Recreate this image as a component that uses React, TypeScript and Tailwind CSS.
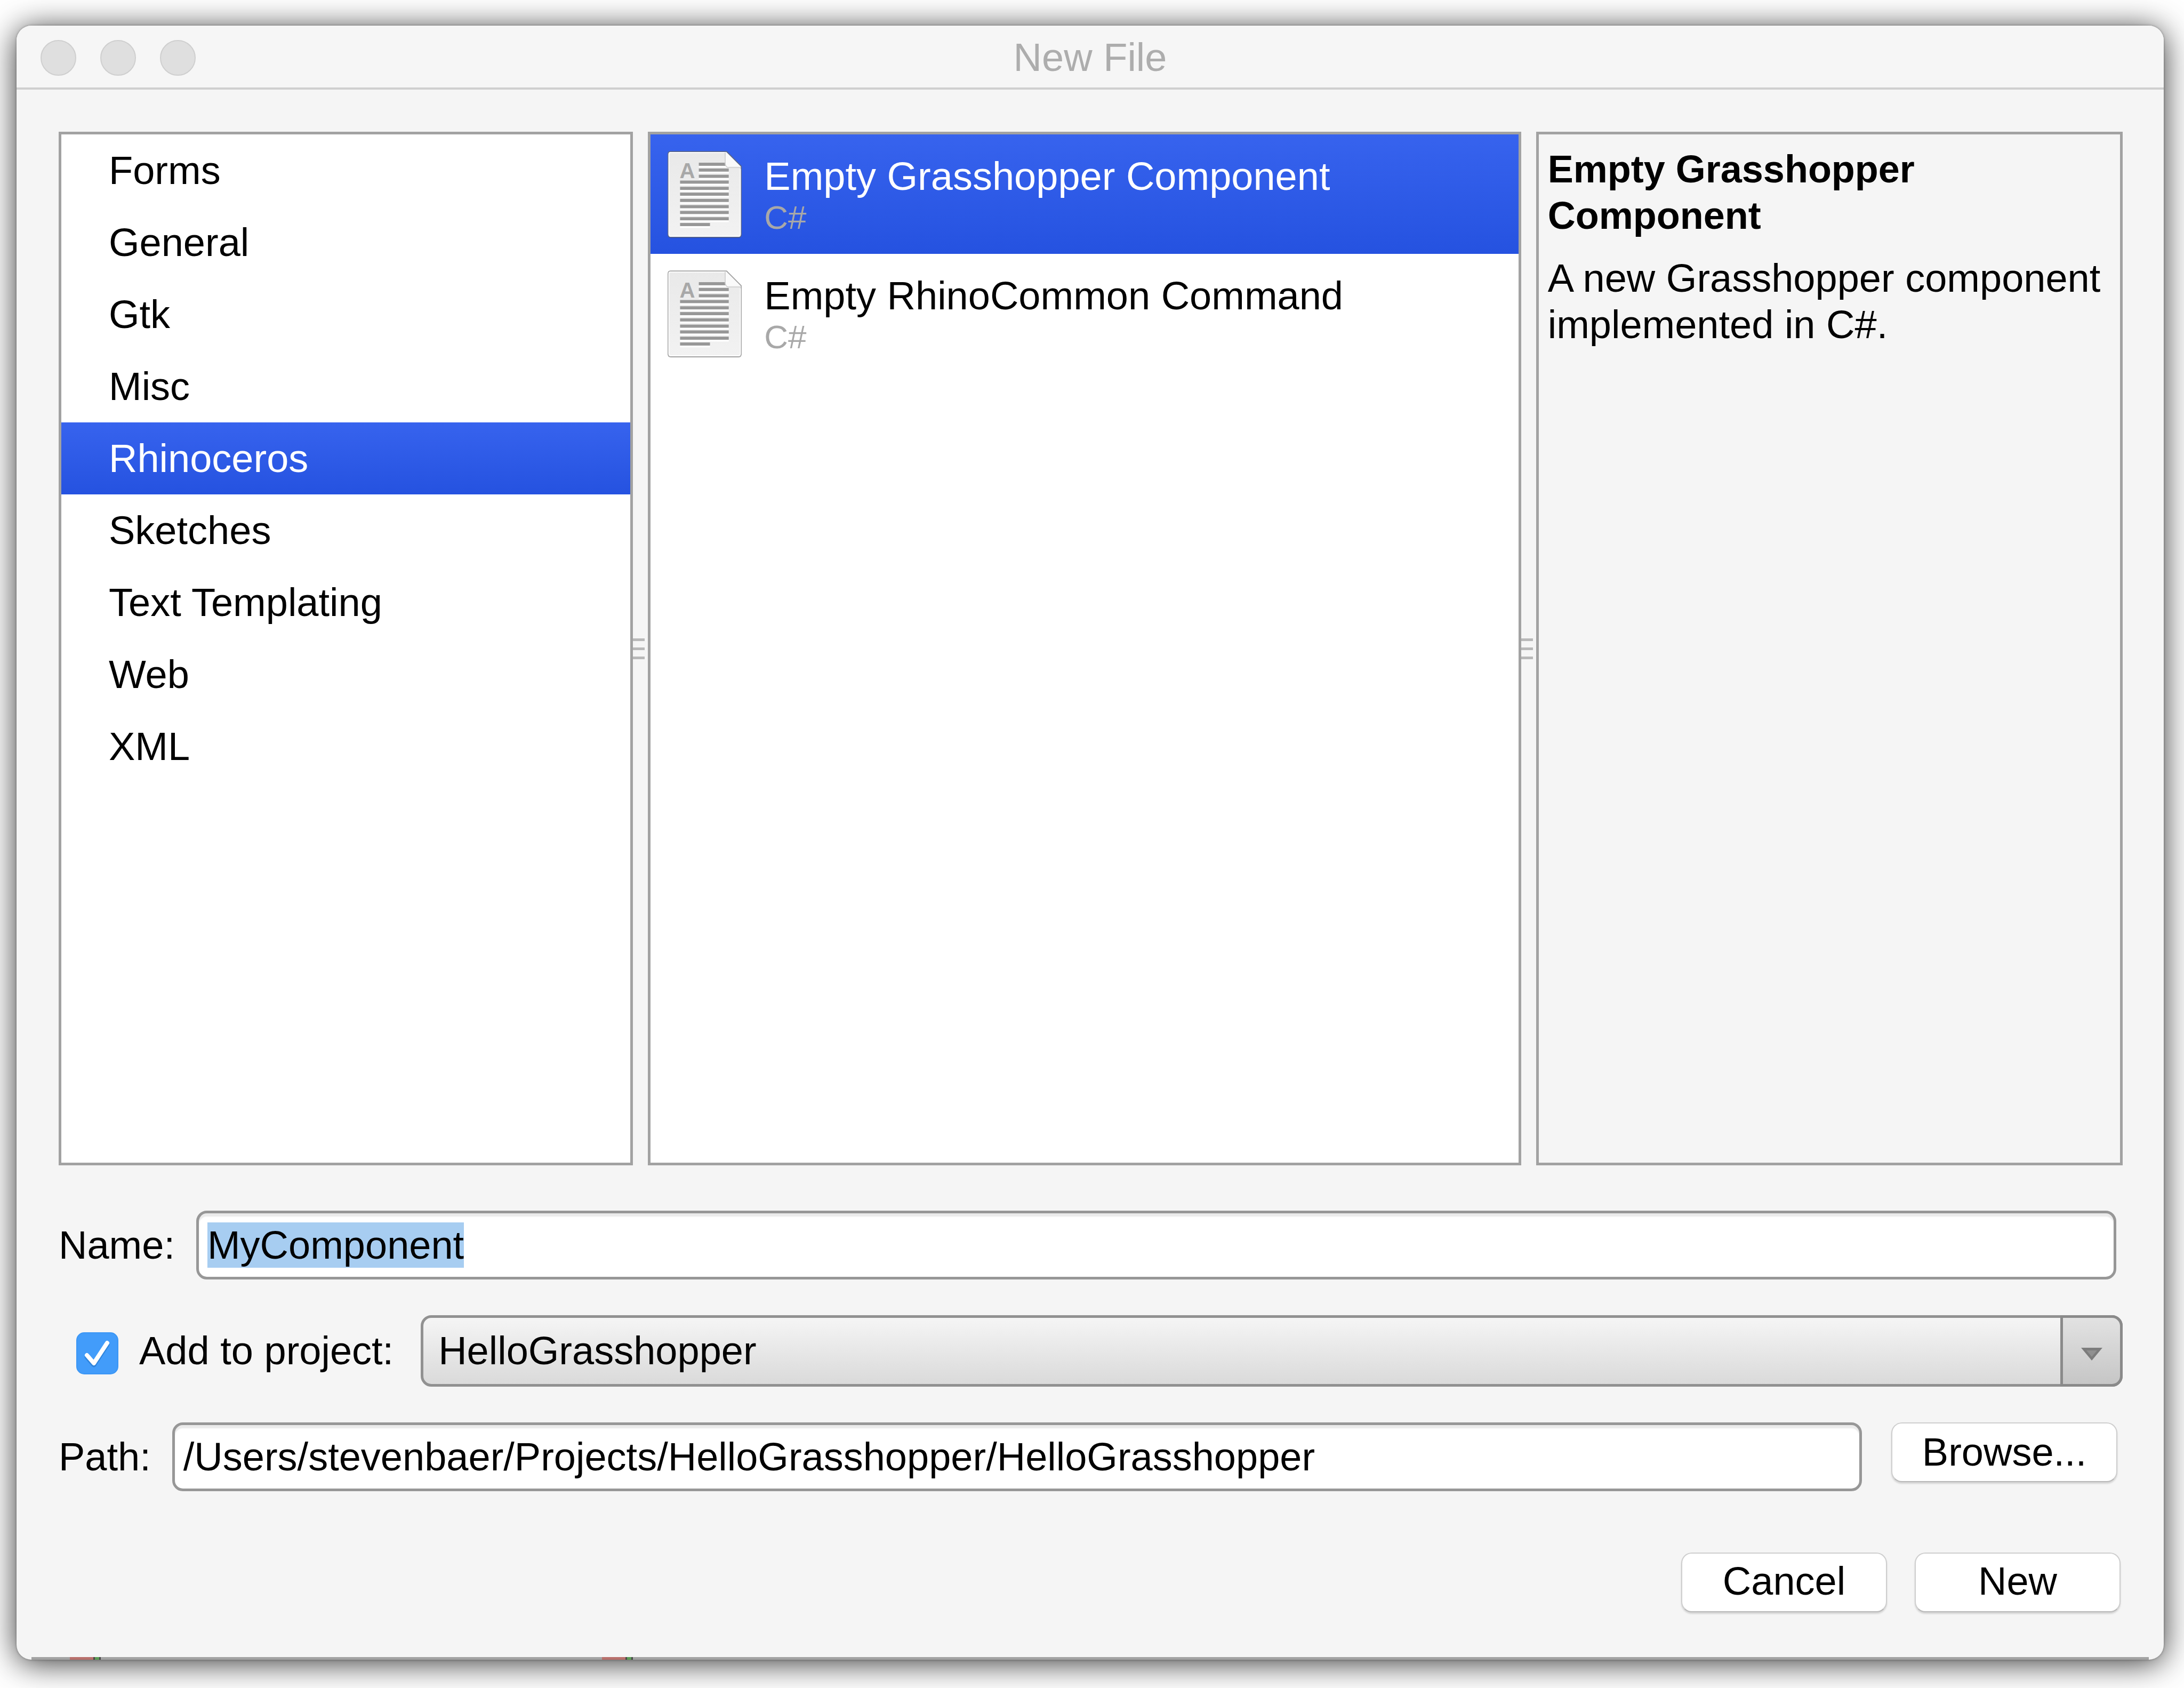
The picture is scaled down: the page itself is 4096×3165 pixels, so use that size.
import { useEffect, useRef, useState } from "react";

const categories = ["Forms", "General", "Gtk", "Misc", "Rhinoceros", "Sketches", "Text Templating", "Web", "XML"];

const templates = [
  { name: "Empty Grasshopper Component", language: "C#" },
  { name: "Empty RhinoCommon Command", language: "C#" },
];

const selectedRow = "bg-linear-to-b from-[#3763ee] to-[#2552e0] text-white";

const textLines = [
  { x: 70, y: 26, width: 67 },
  { x: 70, y: 39, width: 67 },
  { x: 70, y: 53, width: 67 },
  { x: 28, y: 66, width: 109 },
  { x: 28, y: 80, width: 109 },
  { x: 28, y: 93, width: 109 },
  { x: 28, y: 107, width: 109 },
  { x: 28, y: 121, width: 109 },
  { x: 28, y: 134, width: 109 },
  { x: 28, y: 148, width: 109 },
  { x: 28, y: 161, width: 67 },
];

function DocumentIcon({ outlined }: { outlined: boolean }) {
  return (
    <svg viewBox="0 0 166 194" className="h-[163px] w-[139px] shrink-0 overflow-visible" aria-hidden="true">
      <defs>
        <linearGradient id="paper" x1="0" y1="0" x2="0" y2="1">
          <stop offset="0" stopColor="#e9e9e9" />
          <stop offset="1" stopColor="#f2f2f2" />
        </linearGradient>
      </defs>
      <path d="M7 5H133L165 38V189Q165 195 159 195H8Q1 195 1 189V11Q1 5 7 5Z" fill="#000" opacity="0.15" />
      <path
        d="M7 1H132L165 34V187Q165 193 159 193H7Q1 193 1 187V7Q1 1 7 1Z"
        fill="url(#paper)"
        stroke={outlined ? "#a3a3a3" : "#5a6688"}
        strokeWidth="2"
      />
      <path d="M3 186V7Q3 3 7 3H130M3 186Q3 191 8 191H158Q163 191 163 186V40" fill="none" stroke="#fff" strokeWidth="2" />
      {textLines.map((l) => (
        <g key={l.y}>
          <rect x={l.x} y={l.y + 6} width={l.width} height="5" fill="#fff" />
          <rect x={l.x} y={l.y} width={l.width} height="7" fill="#979797" />
        </g>
      ))}
      <text x="27" y="60" fontSize="48" fontWeight="bold" fill="#a8a8a8">
        A
      </text>
      <path d="M132 2L164 35H136Q130 35 130 29V2Z" fill="#fafafa" />
      <path d="M129 3V28Q130 37 138 37H163" fill="none" stroke="#cfcfcf" strokeWidth="2" />
      <path d="M132 1L165 34" stroke={outlined ? "#a3a3a3" : "#5a6688"} strokeWidth="2" />
    </svg>
  );
}

function Splitter() {
  return (
    <div className="flex flex-col justify-center gap-[12px]" role="separator" aria-orientation="vertical">
      <span className="h-[5px] w-[22px] bg-[#b8b8b8]" />
      <span className="h-[5px] w-[22px] bg-[#b8b8b8]" />
      <span className="h-[5px] w-[22px] bg-[#b8b8b8]" />
    </div>
  );
}

/* Sliver of the window underneath, visible along the bottom edge */
function EdgeMarker() {
  return (
    <span className="flex h-[5px] w-[60px]">
      <span className="h-full w-[44px] bg-[#b8706c]" />
      <span className="h-full w-[14px] border-x-[3px] border-[#4a4a4a] bg-[#5b9c55]" />
    </span>
  );
}

const field =
  "min-w-0 flex-1 h-[129px] rounded-[20px] border-[5px] border-[#979797] bg-white px-4 leading-[89px] shadow-[inset_0_6px_2px_#ebebeb] outline-none caret-transparent selection:bg-[#a7cdf1] selection:text-black";

const pushButton =
  "h-[112px] rounded-[20px] border-[2px] border-[#cecece] border-b-[#b9b9b9] bg-white shadow-[0_3px_3px_#00000022]";

const windowButton = "size-[67px] rounded-full border-[2px] border-[#cfcfcf] bg-[#dfdfdf]";

export default function App() {
  const nameField = useRef<HTMLInputElement>(null);
  const [category, setCategory] = useState("Rhinoceros");
  const [template, setTemplate] = useState(templates[0].name);

  useEffect(() => {
    nameField.current?.focus();
    nameField.current?.select();
  }, []);

  return (
    <div className="flex min-h-screen flex-col overflow-hidden bg-white pt-[48px] pr-[38px] pb-[53px] pl-[31px] font-['Liberation_Sans',Arial,sans-serif] text-[74px] leading-[84px] text-black">
      <main className="flex flex-1 flex-col rounded-[28px] bg-[#f5f5f5] shadow-[0_0_4px_#00000055,0_6px_60px_#000000cc]">
        <header className="grid h-[120px] grid-cols-[1fr_auto_1fr] items-center rounded-t-[28px] border-b-[4px] border-[#cfcfcf] bg-[#f6f6f6] pt-1">
          <div className="flex gap-[45px] pl-[45px]">
            <button aria-label="Close" className={windowButton} />
            <button aria-label="Minimize" className={windowButton} />
            <button aria-label="Zoom" className={windowButton} />
          </div>
          <h1 className="text-[#adadad]">New File</h1>
        </header>

        <div className="flex flex-1 flex-col pt-[79px] pr-[77px] pb-[84px] pl-[79px]">
          <div className="grid flex-1 grid-cols-[1077fr_28px_1637fr_28px_1100fr]">
            <ul className="border-[5px] border-[#a2a2a2] bg-white">
              {categories.map((c) => (
                <li key={c}>
                  <button
                    onClick={() => setCategory(c)}
                    className={`block h-[135px] w-full pl-[89px] text-left ${c === category ? selectedRow : ""}`}
                  >
                    {c}
                  </button>
                </li>
              ))}
            </ul>
            <Splitter />
            <ul className="border-[5px] border-[#a2a2a2] bg-white">
              {templates.map((t) => (
                <li key={t.name}>
                  <button
                    onClick={() => setTemplate(t.name)}
                    className={`flex w-full items-center gap-[42px] pl-[32px] text-left ${t.name === template ? selectedRow : ""}`}
                  >
                    <DocumentIcon outlined={t.name !== template} />
                    <span className="flex flex-col pt-[37px] pb-[33px]">
                      <span>{t.name}</span>
                      <span className="text-[62px] leading-[70px] text-[#a8a8a8]">{t.language}</span>
                    </span>
                  </button>
                </li>
              ))}
            </ul>
            <Splitter />
            <section className="border-[5px] border-[#a2a2a2] px-[17px] pt-[22px] leading-[87px]">
              <h2 className="text-[72px] font-bold">Empty Grasshopper Component</h2>
              <p className="mt-[30px]">A new Grasshopper component implemented in C#.</p>
            </section>
          </div>

          <div className="mt-[85px] mr-[12px] flex items-center gap-[40px]">
            <label htmlFor="name">Name:</label>
            <input id="name" ref={nameField} defaultValue="MyComponent" className={field} />
          </div>

          <div className="mt-[67px] flex items-center pl-[33px]">
            <span className="relative mt-2 size-[79px] shrink-0">
              <input
                id="add"
                type="checkbox"
                defaultChecked
                className="block size-full appearance-none rounded-[15px] border-[2px] border-[#3b96f5] bg-[#429cfa]"
              />
              <svg viewBox="0 0 79 79" className="pointer-events-none absolute inset-0" aria-hidden="true">
                <path d="M20 46L33 61L58 23" fill="none" stroke="#2f84dc" strokeWidth="9" strokeLinecap="round" strokeLinejoin="round" />
                <path d="M20 43L33 58L58 20" fill="none" stroke="#fff" strokeWidth="8" strokeLinecap="round" strokeLinejoin="round" />
              </svg>
            </span>
            <label htmlFor="add" className="ml-[39px]">
              Add to project:
            </label>
            <span className="relative ml-[51px] flex min-w-0 flex-1">
              <select
                aria-label="Project"
                className="h-[134px] w-full appearance-none rounded-[20px] border-[5px] border-[#919191] bg-linear-to-b from-[#f5f5f5] to-[#dadada] pl-[28px]"
              >
                <option>HelloGrasshopper</option>
              </select>
              <span className="pointer-events-none absolute inset-y-0 right-0 flex w-[117px] items-center justify-center rounded-r-[20px] border-[5px] border-[#8a8a8a] bg-linear-to-b from-[#e2e2e2] to-[#c6c6c6]">
                <svg viewBox="0 0 40 24" className="mt-3 h-[24px] w-[40px]" aria-hidden="true">
                  <path d="M0 0H40L20 24Z" fill="#7c7c7c" />
                  <path d="M10 5H30L20 17Z" fill="#909090" />
                </svg>
              </span>
            </span>
          </div>

          <div className="mt-[67px] mr-[10px] flex items-start">
            <div className="flex flex-1 items-center gap-[40px]">
              <label htmlFor="path">Path:</label>
              <input id="path" defaultValue="/Users/stevenbaer/Projects/HelloGrasshopper/HelloGrasshopper" className={field} />
            </div>
            <button className={`ml-[55px] w-[424px] ${pushButton}`}>Browse...</button>
          </div>

          <div className="mt-[115px] mr-[4px] flex justify-end gap-[52px]">
            <button className={`w-[386px] pb-1 ${pushButton}`}>Cancel</button>
            <button className={`w-[386px] pb-1 ${pushButton}`}>New</button>
          </div>
        </div>

        <div className="mx-[28px] flex h-[5px] gap-[938px] bg-[#a3a3a3] pl-[72px]" aria-hidden="true">
          <EdgeMarker />
          <EdgeMarker />
        </div>
      </main>
    </div>
  );
}
